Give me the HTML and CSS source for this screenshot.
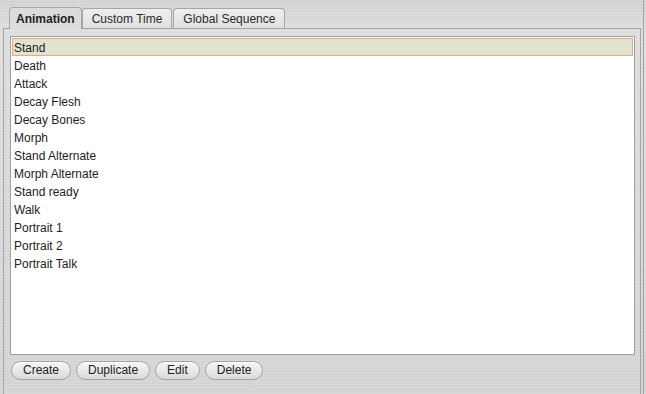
FILE: index.html
```html
<!DOCTYPE html>
<html>
<head>
<meta charset="utf-8">
<link rel="stylesheet" href="styles.css">
</head>
<body>
<div class="window">
  <div class="tabs">
    <div class="tab active">Animation</div>
    <div class="tab">Custom Time</div>
    <div class="tab">Global Sequence</div>
  </div>
  <div class="panel">
    <div class="list">
      <div class="row selected">Stand</div>
      <div class="row">Death</div>
      <div class="row">Attack</div>
      <div class="row">Decay Flesh</div>
      <div class="row">Decay Bones</div>
      <div class="row">Morph</div>
      <div class="row">Stand Alternate</div>
      <div class="row">Morph Alternate</div>
      <div class="row">Stand ready</div>
      <div class="row">Walk</div>
      <div class="row">Portrait 1</div>
      <div class="row">Portrait 2</div>
      <div class="row">Portrait Talk</div>
    </div>
    <div class="buttons">
      <button class="btn">Create</button>
      <button class="btn">Duplicate</button>
      <button class="btn">Edit</button>
      <button class="btn">Delete</button>
    </div>
  </div>
</div>
</body>
</html>
```

FILE: styles.css
```css
html, body {
  margin: 0;
  padding: 0;
}
body {
  width: 646px;
  height: 394px;
  overflow: hidden;
  font-family: "Liberation Sans", Arial, sans-serif;
  font-size: 12px;
  color: #1e1e1e;
  background:
    repeating-linear-gradient(180deg, rgba(255,255,255,0.08) 0px, rgba(255,255,255,0.08) 1px, rgba(0,0,0,0.03) 2px, rgba(0,0,0,0) 3px),
    linear-gradient(180deg, #d4d4d4 0%, #e0e0e0 8%, #dcdcdc 40%, #d6d6d6 100%);
}
.window {
  box-sizing: border-box;
  width: 644px;
  height: 394px;
  padding: 7px 0 0 3px;
  border-right: 1px solid #a4a4a4;
  display: flex;
  flex-direction: column;
}
.tabs {
  display: flex;
  margin-left: 6px;
  height: 21px;
  align-items: flex-end;
  position: relative;
  z-index: 1;
}
.tab {
  box-sizing: border-box;
  height: 20px;
  line-height: 20px;
  padding: 0 9px;
  margin-right: 1px;
  border: 1px solid #a6a6a6;
  border-bottom: none;
  border-radius: 4px 4px 0 0;
  background: linear-gradient(180deg, #eeeeee 0%, #e0e0e0 100%);
  color: #2a2a2a;
}
.tab.active {
  height: 22px;
  margin-bottom: -1px;
  margin-right: 0;
  line-height: 22px;
  padding: 0 6px;
  font-weight: bold;
  background: #dcdcdc;
  color: #222;
}
.panel {
  box-sizing: border-box;
  width: 638px;
  flex: 1;
  border: 1px solid #a4a4a4;
  border-bottom: none;
  padding: 7px 5px 0 6px;
  display: flex;
  flex-direction: column;
}
.list {
  box-sizing: border-box;
  height: 319px;
  background: #ffffff;
  border: 1px solid #a0a0a0;
  padding: 1px;
}
.row {
  box-sizing: border-box;
  height: 18px;
  line-height: 20px;
  padding-left: 2px;
  white-space: nowrap;
}
.row.selected {
  border: 1px solid #eea58a;
  background: #e0e4ce;
  line-height: 18px;
  padding-left: 1px;
}
.buttons {
  display: flex;
  gap: 5px;
  margin-top: 6px;
  padding-left: 1px;
}
.btn {
  box-sizing: border-box;
  height: 19px;
  padding: 0 11px;
  font-family: "Liberation Sans", Arial, sans-serif;
  font-size: 12px;
  color: #222;
  border: 1px solid #a2a2a2;
  border-radius: 10px;
  background: linear-gradient(180deg, #f6f6f6 0%, #e8e8e8 50%, #dadada 100%);
  box-shadow: inset 0 1px 0 #ffffff;
  line-height: 17px;
}
```
